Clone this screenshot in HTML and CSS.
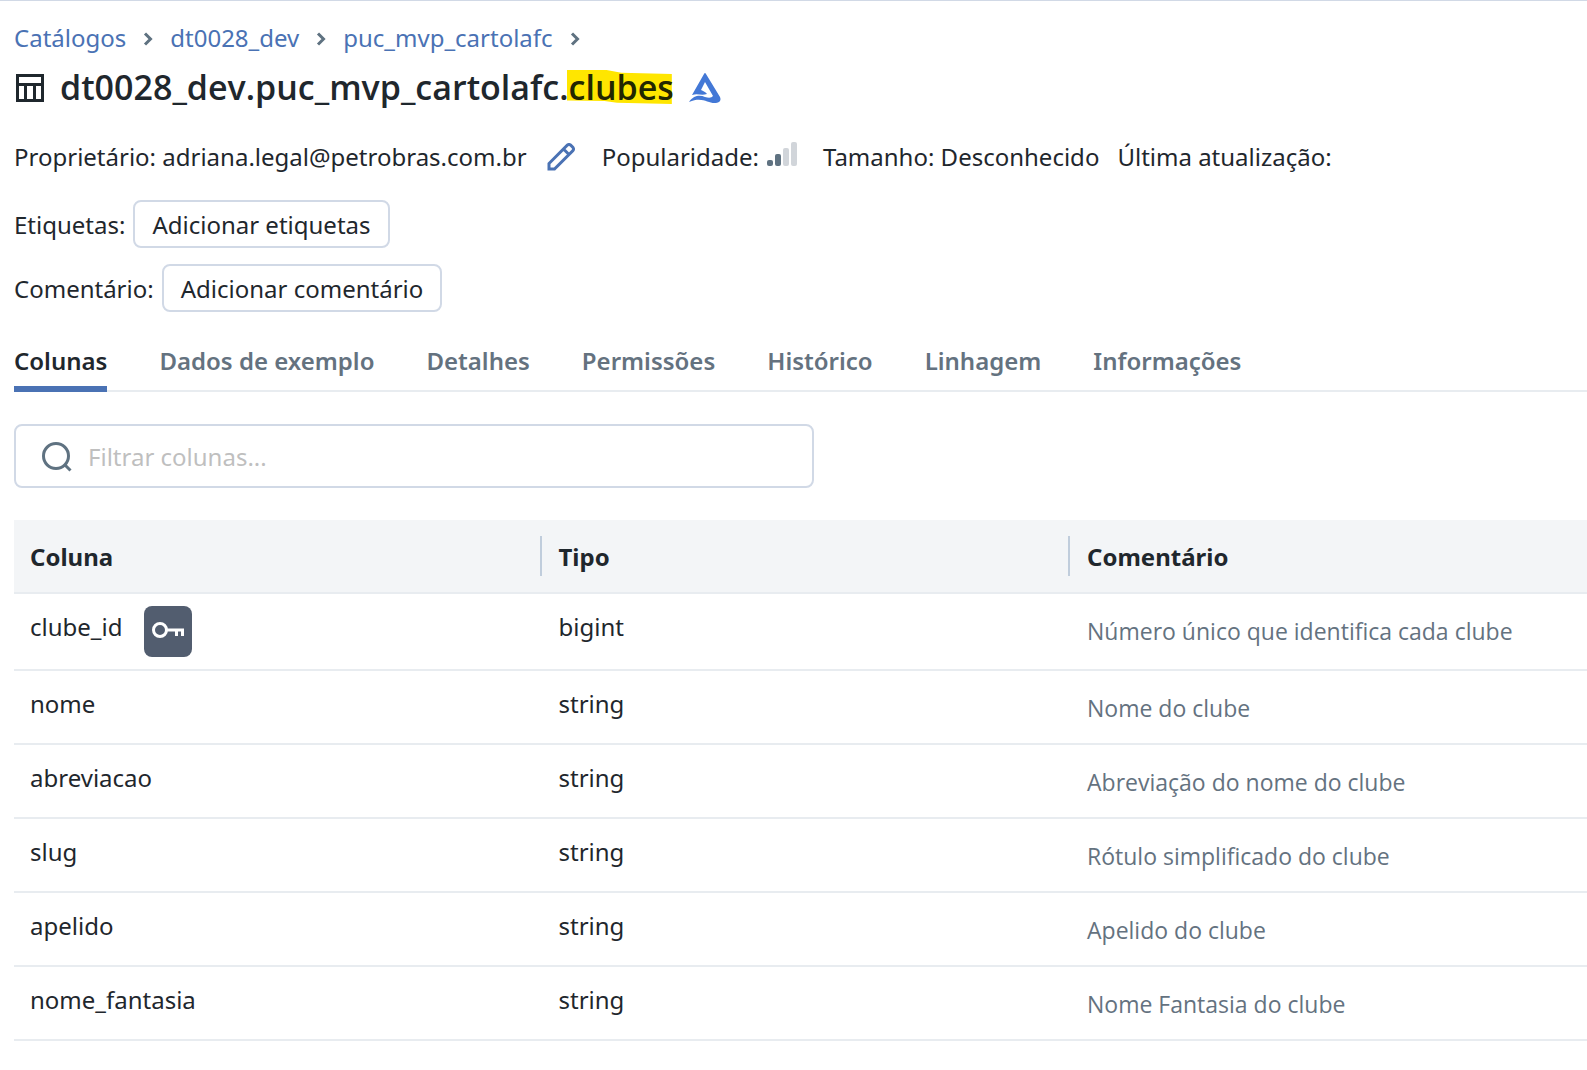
FILE: index.html
```html
<!DOCTYPE html>
<html lang="pt-BR">
<head>
<meta charset="utf-8">
<title>dt0028_dev.puc_mvp_cartolafc.clubes</title>
<link rel="stylesheet" href="styles.css">
</head>
<body>
<main class="page">
  <nav class="breadcrumb" aria-label="Navegação">
    <a href="#catalogos">Catálogos</a>
    <svg class="chevron" viewBox="0 0 8 14" aria-hidden="true"><path d="M1 1.500l5.500 5.500-5.500 5.500"/></svg>
    <a href="#dt0028_dev">dt0028_dev</a>
    <svg class="chevron" viewBox="0 0 8 14" aria-hidden="true"><path d="M1 1.500l5.500 5.500-5.500 5.500"/></svg>
    <a href="#puc_mvp_cartolafc">puc_mvp_cartolafc</a>
    <svg class="chevron" viewBox="0 0 8 14" aria-hidden="true"><path d="M1 1.500l5.500 5.500-5.500 5.500"/></svg>
  </nav>

  <header class="title">
    <svg class="title-icon" viewBox="0 0 28 28" aria-hidden="true"><path d="M1.500 1.500h25v25h-25zM1.500 10.500h25M9.500 10.500v16M18.500 10.500v16"/></svg>
    <h1>dt0028_dev.puc_mvp_cartolafc.<mark>clubes</mark></h1>
    <svg class="delta-icon" viewBox="0 0 32 31" aria-hidden="true"><path d="M15 1Q16 -1 17 1L31 24Q33 29 27 30C19 31 14 23 0 29C5 22 11 22 16 24Q22 26 24 23L16 9L12 17C14 18 17 19 18 21C12 23 9 20 3 22Z"/></svg>
  </header>

  <div class="meta">
    <span>Proprietário: adriana.legal@petrobras.com.br</span>
    <button class="edit" type="button" aria-label="Editar proprietário"><svg viewBox="0 0 28 28" aria-hidden="true"><path d="M2 26v-5.500L20.500 2q1.500-1 3 0L26 4.500q1 1.500 0 3L7.500 26zM16.500 6l5.500 5.500"/></svg></button>
    <span>Popularidade:</span>
    <svg class="bars" viewBox="0 0 30 24" role="img" aria-label="Popularidade baixa"><rect class="on" y="18" width="6" height="6" rx="2"/><rect class="on" x="8" y="12" width="6" height="12" rx="2"/><rect x="16" y="6" width="6" height="18" rx="2"/><rect x="24" width="6" height="24" rx="2"/></svg>
    <span>Tamanho: Desconhecido</span>
    <span>Última atualização:</span>
  </div>

  <div class="field"><span>Etiquetas:</span><button class="add" type="button">Adicionar etiquetas</button></div>
  <div class="field"><span>Comentário:</span><button class="add" type="button">Adicionar comentário</button></div>

  <nav class="tabs" aria-label="Seções">
    <a class="active" href="#colunas">Colunas</a>
    <a href="#dados">Dados de exemplo</a>
    <a href="#detalhes">Detalhes</a>
    <a href="#permissoes">Permissões</a>
    <a href="#historico">Histórico</a>
    <a href="#linhagem">Linhagem</a>
    <a href="#informacoes">Informações</a>
  </nav>

  <label class="search">
    <svg viewBox="0 0 30 30" aria-hidden="true"><circle cx="14" cy="14" r="12.500"/><path d="M23 23l5.500 5.500"/></svg>
    <input type="text" placeholder="Filtrar colunas..." aria-label="Filtrar colunas">
  </label>

  <table class="columns">
    <thead>
      <tr><th scope="col">Coluna</th><th scope="col">Tipo</th><th scope="col">Comentário</th></tr>
    </thead>
    <tbody>
      <tr><td><div class="key-cell">clube_id <span class="key"><svg viewBox="0 0 32 16" aria-hidden="true"><circle cx="8" cy="8" r="6.500"/><path d="M15 8h17M24.500 8v6M30.500 8v6"/></svg></span></div></td><td>bigint</td><td class="comment">Número único que identifica cada clube</td></tr>
      <tr><td>nome</td><td>string</td><td class="comment">Nome do clube</td></tr>
      <tr><td>abreviacao</td><td>string</td><td class="comment">Abreviação do nome do clube</td></tr>
      <tr><td>slug</td><td>string</td><td class="comment">Rótulo simplificado do clube</td></tr>
      <tr><td>apelido</td><td>string</td><td class="comment">Apelido do clube</td></tr>
      <tr><td>nome_fantasia</td><td>string</td><td class="comment">Nome Fantasia do clube</td></tr>
    </tbody>
  </table>
</main>
</body>
</html>
```
FILE: styles.css
```css
* { box-sizing: border-box; }

body {
  margin: 0;
  background: #fff;
  color: #1f272d;
  font: 24px/36px "Noto Sans", "Open Sans", sans-serif;
}

a { color: inherit; text-decoration: none; }
button, input { font: inherit; color: inherit; }
svg { flex: none; fill: none; stroke: currentColor; stroke-width: 3; }

.page {
  padding: 19px 0 0 14px;
  border-top: 1px solid #d1d9e6;
}

.breadcrumb { display: flex; align-items: center; gap: 18px; color: #4a72b4; }
.chevron { width: 8px; height: 14px; margin-top: 2px; color: #5f7281; overflow: visible; }

.title { display: flex; align-items: center; margin-top: 7px; }
.title-icon { width: 28px; height: 28px; margin: 2px 16px 0 2px; }
.title h1 { margin: 0; font: 600 34px/48px "Open Sans", "Noto Sans", sans-serif; }
.title mark { position: relative; z-index: 0; background: none; color: #222600; }
.title mark::before {
  content: "";
  position: absolute;
  inset: 6px 2px 6px -2px;
  z-index: -1;
  background: #ffe600;
  clip-path: polygon(0 0, 38% 0, 52% 8%, 100% 12%, 100% 100%, 48% 96%, 36% 91%, 0 90%);
}
.delta-icon { width: 32px; height: 31px; margin: 2px 0 0 15px; fill: #4378d6; stroke: none; }

.meta { display: flex; align-items: center; margin-top: 28px; }
.edit {
  width: 28px;
  height: 28px;
  margin: 0 27px 0 20px;
  padding: 0;
  border: 0;
  background: none;
  color: #4a72b4;
}
.edit svg { display: block; width: 28px; height: 28px; }
.bars { width: 30px; height: 24px; margin: 0 26px 6px 8px; fill: #d1d5da; stroke: none; }
.bars .on { fill: #5f7281; }
.meta span + span { margin-left: 18px; }

.field { display: flex; align-items: center; gap: 8px; margin-top: 16px; }
.meta + .field { margin-top: 25px; }
.add {
  height: 48px;
  padding: 2px 17px 0;
  border: 2px solid #d1d9e6;
  border-radius: 8px;
  background: #fff;
}
.field span { padding-top: 2px; }

.tabs {
  display: flex;
  gap: 52px;
  margin-top: 31px;
  color: #64727f;
  font-weight: 600;
  box-shadow: inset 0 -2px #e8ecf0;
}
.tabs a { padding-bottom: 13px; }
.tabs .active { padding-bottom: 7px; border-bottom: 6px solid #4a72b4; color: #1f272d; }

.search {
  display: flex;
  align-items: center;
  gap: 16px;
  width: 800px;
  max-width: 100%;
  height: 64px;
  margin-top: 32px;
  padding: 2px 26px 0;
  border: 2px solid #d1d9e6;
  border-radius: 8px;
}
.search svg { width: 30px; height: 30px; color: #5f7281; }
.search input { flex: 1; min-width: 0; padding: 0; border: 0; outline: 0; background: none; }
.search input::placeholder { color: #bfbfbf; opacity: 1; }

.columns {
  width: 100%;
  margin-top: 32px;
  border-collapse: separate;
  border-spacing: 0;
  table-layout: fixed;
}
.columns th, .columns td {
  padding: 15px 16px 21px;
  border-bottom: 2px solid #e8ecf0;
  text-align: left;
  vertical-align: top;
}
.columns th { position: relative; padding: 19px 16px 17px; background: #f3f5f7; font-weight: 700; }
.columns th:nth-child(-n+2) { width: 33.6%; }
.columns th:nth-child(-n+2)::after {
  content: "";
  position: absolute;
  top: 16px;
  right: 1px;
  width: 2px;
  height: 40px;
  background: #c0cddc;
}
.columns .comment {
  padding: 19px 16px 17px;
  color: #64727f;
  font-family: "Open Sans", "Noto Sans", sans-serif;
  font-size: 23px;
}

.key-cell { display: flex; gap: 22px; }
.key {
  display: grid;
  place-items: center;
  width: 48px;
  height: 51px;
  margin: -3px 0 -9px;
  padding-bottom: 4px;
  border-radius: 8px;
  background: #525d6f;
  color: #fff;
}
.key svg { width: 32px; height: 16px; }
```
